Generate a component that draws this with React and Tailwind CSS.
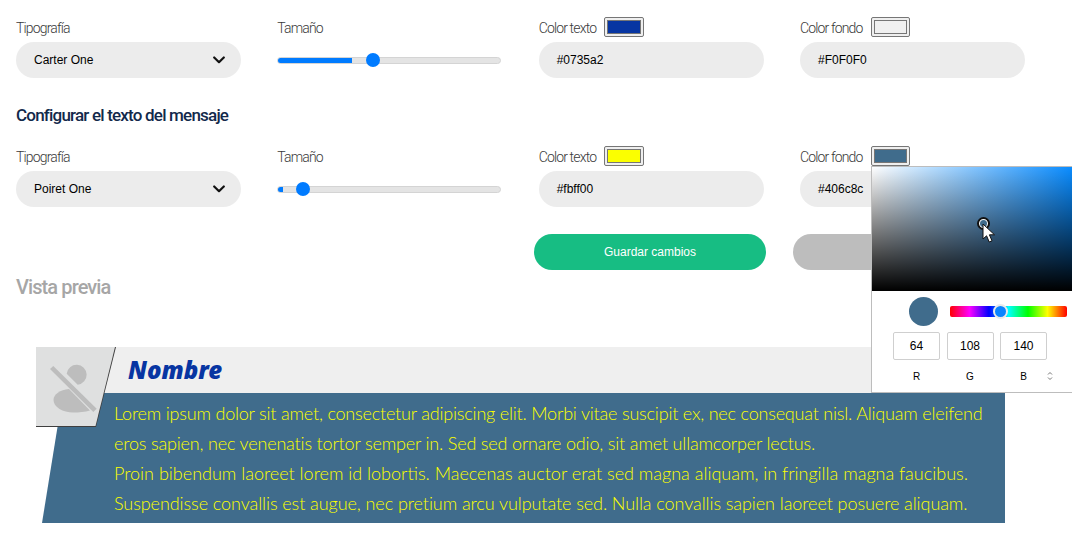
import React from "react";

const labelFont = "font-['Roboto',sans-serif] font-light text-[14px] tracking-[-0.85px] text-[#3a3a3a] leading-5 pt-[2px]";
const fieldFont = "font-['Liberation_Sans',sans-serif] text-[12px] text-black";

const Chevron = () => (
  <svg width="12" height="8" viewBox="0 0 12 8" fill="none" stroke="#111" strokeWidth="2.2" strokeLinecap="round" strokeLinejoin="round">
    <path d="M1.2 1.5 6 6.2l4.8-4.7" />
  </svg>
);

const SelectField = ({ value }) => (
  <div className={`${fieldFont} h-9 rounded-[18px] bg-[#ececec] pl-[18px] pr-4 flex items-center justify-between`}>
    <span>{value}</span>
    <Chevron />
  </div>
);

const Slider = ({ fill, thumb }) => (
  <div className="relative h-9 flex items-center">
    <div className="w-[224px] h-[7px] rounded-full bg-[#e4e4e4] border border-[#d4d4d4] overflow-hidden">
      <div className="h-full bg-[#007bff]" style={{ width: fill }} />
    </div>
    <div className="absolute top-[11px] w-3.5 h-3.5 rounded-full bg-[#007bff]" style={{ left: thumb }} />
  </div>
);

const Swatch = ({ color, width }) => (
  <div className="h-5 p-[2px] rounded-[2px] border border-[#767676] bg-[#efefef]" style={{ width }}>
    <div className="w-full h-full border border-[#767676]" style={{ backgroundColor: color }} />
  </div>
);

const ColorField = ({ label, value, color, width }) => (
  <div>
    <div className="h-5 flex items-center gap-2 mb-[5px]">
      <span className={labelFont}>{label}</span>
      <Swatch color={color} width={width} />
    </div>
    <div className={`${fieldFont} h-9 rounded-[18px] bg-[#ececec] pl-[18px] flex items-center`}>{value}</div>
  </div>
);

const Label = ({ children }) => (
  <div className={`${labelFont} h-5 mb-[5px] flex items-center`}>{children}</div>
);

const ConfigRow = ({ font, fill, thumb, text, textColor, bg, bgColor }) => (
  <div className="grid grid-cols-[225px_225px_225px_225px] gap-x-[36.33px]">
    <div>
      <Label>Tipografía</Label>
      <SelectField value={font} />
    </div>
    <div>
      <Label>Tamaño</Label>
      <Slider fill={fill} thumb={thumb} />
    </div>
    <ColorField label="Color texto" value={text} color={textColor} width={40} />
    <ColorField label="Color fondo" value={bg} color={bgColor} width={39} />
  </div>
);

const Avatar = () => (
  <div className="absolute left-0 top-0 w-20 h-20 bg-[#3f3f3f] [clip-path:polygon(0_0,80px_0,60px_80px,0_80px)]">
    <div className="w-20 h-[79px] bg-[#dfe0e0] flex items-start [clip-path:polygon(0_0,79px_0,59.5px_79px,0_79px)]">
      <svg width="62" height="70" viewBox="0 0 62 70" fill="#bdbdbd">
        <path d="M30.700 26.700A10 10 0 1 1 41.700 37.700z" />
        <path d="M33 42c-9 1-15.500 5-15.500 11 0 7 9.500 12.500 19.500 12.500 6 0 12-.5 17-2z" />
        <path d="M14 22l3.300-3 43.400 42.700-3.400 3.300z" />
      </svg>
    </div>
  </div>
);

const ColorPicker = () => (
  <div className="absolute left-[871px] top-[166px] w-[201px] h-[227px] bg-white border-l border-t border-b border-[#bdbdbd]">
    <div className="relative h-[124px] bg-[linear-gradient(to_top,#000,transparent),linear-gradient(to_right,#fff,#0a8cff)]">
      <div className="absolute left-[105px] top-[50px] w-[13px] h-[13px] rounded-full border-2 border-[#111] bg-white p-[1px]">
        <div className="w-full h-full rounded-full bg-[#406c8c]" />
      </div>
      <svg className="absolute left-[110px] top-[56px]" width="14" height="21" viewBox="0 0 14 21">
        <path d="M1 1v15l3.600-3.200 2.600 6.200 2.800-1.200-2.600-6H12.500z" fill="#fff" stroke="#111" strokeWidth="1" />
      </svg>
    </div>
    <div className="flex items-center pl-[37px] pt-[6px]">
      <div className="w-[29px] h-[29px] rounded-full bg-[#406c8c]" />
      <div className="relative ml-3 w-[117px] h-[11px] rounded-[2px] bg-[linear-gradient(to_right,#f00,#f0f,#00f,#0ff,#0f0,#ff0,#f00)]">
        <div className="absolute left-[43px] top-[-2px] w-[15px] h-[15px] rounded-full bg-[#0a84ff] border-2 border-[#eaeaea]" />
      </div>
    </div>
    <div className="flex gap-[6.5px] pl-[21px] pt-[6px] font-['Liberation_Sans',sans-serif] text-[12px] text-black">
      {["64", "108", "140"].map((v) => (
        <div key={v} className="w-[47px] h-[28px] border border-[#cfcfcf] rounded-[2px] flex items-center justify-center">{v}</div>
      ))}
    </div>
    <div className="relative flex gap-[6.5px] pl-[21px] pt-[9px] font-['Liberation_Sans',sans-serif] text-[10px] text-black">
      {["R", "G", "B"].map((v) => (
        <div key={v} className="w-[47px] h-[15px] flex items-center justify-center">{v}</div>
      ))}
      <svg className="absolute left-[175px] top-[11px]" width="6" height="10" viewBox="0 0 6 10" fill="none" stroke="#777" strokeWidth="1">
        <path d="M1 3.500 3 1.500l2 2M1 6.500l2 2 2-2" />
      </svg>
    </div>
  </div>
);

const messageLines = [
  ["Lorem ipsum dolor sit amet, consectetur adipiscing elit. Morbi vitae suscipit ex, nec consequat nisl. Aliquam eleifend", "tracking-[-0.195px]"],
  ["eros sapien, nec venenatis tortor semper in. Sed sed ornare odio, sit amet ullamcorper lectus.", "tracking-[-0.17px]"],
  ["Proin bibendum laoreet lorem id lobortis. Maecenas auctor erat sed magna aliquam, in fringilla magna faucibus.", "tracking-[0px]"],
  ["Suspendisse convallis est augue, nec pretium arcu vulputate sed. Nulla convallis sapien laoreet posuere aliquam.", "tracking-[-0.07px]"],
];

export default function App() {
  return (
    <div className="relative w-[1072px] h-[552px] overflow-hidden bg-white">
      <div className="pl-4 pt-[17px]">
        <ConfigRow font="Carter One" fill="33%" thumb="89px" text="#0735a2" textColor="#0735a2" bg="#F0F0F0" bgColor="#F0F0F0" />
        <h2 className="h-[68px] pt-[26px] font-['Roboto',sans-serif] font-medium text-[17px] leading-[22px] tracking-[-0.8px] text-[#12294b]">
          Configurar el texto del mensaje
        </h2>
        <ConfigRow font="Poiret One" fill="2%" thumb="19px" text="#fbff00" textColor="#fbff00" bg="#406c8c" bgColor="#406c8c" />
      </div>

      <div className="flex justify-end gap-[27px] pr-[47px] mt-[27px]">
        <button className="w-[232px] h-9 rounded-[18px] bg-[#17bd83] text-white font-['Liberation_Sans',sans-serif] font-normal text-[12px]">
          Guardar cambios
        </button>
        <div className="w-[232px] h-9 rounded-[18px] bg-[#bdbdbd]" />
      </div>

      <h2 className="pl-4 mt-[4px] h-[26px] font-['Roboto',sans-serif] font-medium text-[20px] leading-[26px] tracking-[-0.9px] text-[#a6a6a6]">
        Vista previa
      </h2>

      <div className="relative ml-9 mt-[47px] w-[969px]">
        <div className="h-[46px] bg-[#efefef] pl-[92px] flex items-center font-['Noto_Sans',sans-serif] font-black italic text-[24px] text-[#0735a2]">
          Nombre
        </div>
        <div className="ml-[6px] h-[130px] pl-[72px] pt-[5px] bg-[#406c8c] text-[#fbff00] font-['Lato',sans-serif] font-light text-[18px] leading-[30px] whitespace-nowrap [clip-path:polygon(21px_0,100%_0,100%_100%,0_100%)]">
          {messageLines.map(([line, spacing]) => (
            <div key={line} className={spacing}>{line}</div>
          ))}
        </div>
        <Avatar />
      </div>

      <ColorPicker />
    </div>
  );
}
